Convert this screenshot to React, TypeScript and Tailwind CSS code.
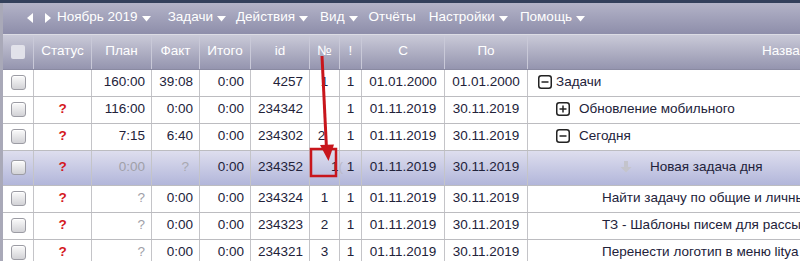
import React from "react";

const F = { fontFamily: '"Liberation Sans", Arial, sans-serif' };

const W = [31, 58, 60, 48, 51, 59, 30, 22, 83, 83];

function Caret() {
  return (
    <svg width="9" height="6" viewBox="0 0 9 6" className="ml-[4px] mt-[2px]">
      <path d="M0 0 H9 L4.5 5.5 Z" fill="#fff" />
    </svg>
  );
}

function Checkbox() {
  return (
    <div className="w-[15px] h-[15px] rounded-[3px] border border-[#9c9ca4] bg-gradient-to-b from-[#fbfbfb] to-[#d2d2d6] shadow-[inset_0_1px_0_#fff]" />
  );
}

function TreeBox({ plus }: { plus?: boolean }) {
  return (
    <svg width="14" height="14" viewBox="0 0 14 14">
      <rect x="0.75" y="0.75" width="12.5" height="12.5" rx="2.5" fill="#fff" stroke="#222" strokeWidth="1.5" />
      <path d="M3.5 7 H10.5" stroke="#222" strokeWidth="1.5" />
      {plus && <path d="M7 3.5 V10.5" stroke="#222" strokeWidth="1.5" />}
    </svg>
  );
}

type Row = {
  status?: boolean;
  plan: string;
  planGrey?: boolean;
  fakt: string;
  faktGrey?: boolean;
  itogo: string;
  id: string;
  num: React.ReactNode;
  c: string;
  po: string;
  name: React.ReactNode;
  hl?: boolean;
};

const rows: Row[] = [
  {
    plan: "160:00",
    fakt: "39:08",
    itogo: "0:00",
    id: "4257",
    num: "1",
    c: "01.01.2000",
    po: "01.01.2000",
    name: (
      <div className="flex items-center pl-[10px]">
        <TreeBox />
        <span className="ml-[4px]">Задачи</span>
      </div>
    ),
  },
  {
    status: true,
    plan: "116:00",
    fakt: "0:00",
    itogo: "0:00",
    id: "234342",
    num: "",
    c: "01.11.2019",
    po: "30.11.2019",
    name: (
      <div className="flex items-center pl-[28px]">
        <TreeBox plus />
        <span className="ml-[9px]">Обновление мобильного</span>
      </div>
    ),
  },
  {
    status: true,
    plan: "7:15",
    fakt: "6:40",
    itogo: "0:00",
    id: "234302",
    num: <span className="pr-[6px]">2</span>,
    c: "01.11.2019",
    po: "30.11.2019",
    name: (
      <div className="flex items-center pl-[28px]">
        <TreeBox />
        <span className="ml-[9px]">Сегодня</span>
      </div>
    ),
  },
  {
    status: true,
    plan: "0:00",
    planGrey: true,
    fakt: "?",
    faktGrey: true,
    itogo: "0:00",
    id: "234352",
    num: (
      <span className="flex w-full justify-end">
        <span>1</span>
        <span className="text-[#b8b8c8] -mr-[4px]">(</span>
      </span>
    ),
    c: "01.11.2019",
    po: "30.11.2019",
    hl: true,
    name: (
      <div className="flex items-center pl-[91px]">
        <svg width="14" height="14" viewBox="0 0 14 14">
          <path d="M5 1 H9 V7 H12.5 L7 12.5 L1.5 7 H5 Z" fill="#c4c4cc" />
        </svg>
        <span className="ml-[17px]">Новая задача дня</span>
      </div>
    ),
  },
  {
    status: true,
    plan: "?",
    planGrey: true,
    fakt: "0:00",
    itogo: "0:00",
    id: "234324",
    num: "1",
    c: "01.11.2019",
    po: "30.11.2019",
    name: <div className="pl-[74px]">Найти задачу по общие и личные</div>,
  },
  {
    status: true,
    plan: "?",
    planGrey: true,
    fakt: "0:00",
    itogo: "0:00",
    id: "234323",
    num: "2",
    c: "01.11.2019",
    po: "30.11.2019",
    name: <div className="pl-[74px]">ТЗ - Шаблоны писем для рассылки</div>,
  },
  {
    status: true,
    plan: "?",
    planGrey: true,
    fakt: "0:00",
    itogo: "0:00",
    id: "234321",
    num: "3",
    c: "01.11.2019",
    po: "30.11.2019",
    name: <div className="pl-[74px]">Перенести логотип в меню litya</div>,
  },
];

function Cell({
  w,
  children,
  align = "center",
  className = "",
}: {
  w: number;
  children?: React.ReactNode;
  align?: "center" | "right" | "left";
  className?: string;
}) {
  const a =
    align === "right" ? "justify-end pr-[6px]" : align === "left" ? "justify-start" : "justify-center";
  return (
    <div
      className={`shrink-0 flex items-center border-r border-[#c4c4c8] h-full pb-[2px] ${a} ${className}`}
      style={{ width: w }}
    >
      {children}
    </div>
  );
}

export default function App() {
  const headers = ["Статус", "План", "Факт", "Итого", "id", "№", "!", "С", "По"];
  return (
    <div className="relative w-[800px] h-[261px] overflow-hidden bg-white text-[13.5px]" style={F}>
      <div className="h-[3px] bg-[#33405c]" />
      <div className="border-l-[3px] border-[#a9a9b8]">
        {/* toolbar */}
        <div className="h-[31px] flex items-center bg-gradient-to-b from-[#b3b3c8] to-[#8e8eaa] text-white pb-[2px] whitespace-nowrap">
          <svg width="7" height="10" viewBox="0 0 7 10" className="ml-[24px]">
            <path d="M6 0 V10 L0 5 Z" fill="#fff" />
          </svg>
          <svg width="7" height="10" viewBox="0 0 7 10" className="ml-[10px]">
            <path d="M1 0 V10 L7 5 Z" fill="#fff" />
          </svg>
          <span className="ml-[6px]">Ноябрь 2019</span>
          <Caret />
          <span className="ml-[17px]">Задачи</span>
          <Caret />
          <span className="ml-[10px]">Действия</span>
          <Caret />
          <span className="ml-[12px]">Вид</span>
          <Caret />
          <span className="ml-[11px]">Отчёты</span>
          <span className="ml-[13px]">Настройки</span>
          <Caret />
          <span className="ml-[12px]">Помощь</span>
          <Caret />
        </div>
        <div className="h-[1px] bg-[#dcdce4]" />
        {/* header */}
        <div className="h-[35px] flex bg-gradient-to-b from-[#cacad8] to-[#9595af] text-white border-b border-[#8a8aa2] whitespace-nowrap">
          <div
            className="shrink-0 flex items-center justify-center border-r border-[#c9c9d8] h-full"
            style={{ width: W[0] }}
          >
            <div className="w-[14px] h-[14px] rounded-[2px] bg-[#e2e2ea]" />
          </div>
          {headers.map((h, i) => (
            <div
              key={h}
              className="shrink-0 flex items-center justify-center border-r border-[#c9c9d8] h-full pb-[2px]"
              style={{ width: W[i + 1] }}
            >
              {h}
            </div>
          ))}
          <div className="flex-1 flex items-center pl-[234px] pb-[2px] overflow-hidden">Название</div>
        </div>
        {/* rows */}
        {rows.map((r, i) => (
          <div
            key={i}
            className={`flex border-b border-[#bcbcc0] text-[#22223a] whitespace-nowrap ${
              r.hl ? "h-[35px] bg-gradient-to-b from-[#dedeee] to-[#b2b6da]" : "h-[27px]"
            }`}
          >
            <Cell w={W[0]}>
              <Checkbox />
            </Cell>
            <Cell w={W[1]}>
              {r.status && <span className="text-[#d4161c] font-bold">?</span>}
            </Cell>
            <Cell w={W[2]} align="right" className={r.planGrey ? "text-[#a0a0a8]" : ""}>
              {r.plan}
            </Cell>
            <Cell w={W[3]} align="right" className={r.faktGrey ? "text-[#a8a8b0] pr-[10px]" : ""}>
              {r.fakt}
            </Cell>
            <Cell w={W[4]} align="right">
              {r.itogo}
            </Cell>
            <Cell w={W[5]} align="right">
              {r.id}
            </Cell>
            <Cell w={W[6]}>{r.num}</Cell>
            <Cell w={W[7]}>1</Cell>
            <Cell w={W[8]}>{r.c}</Cell>
            <Cell w={W[9]}>{r.po}</Cell>
            <div className="flex-1 flex items-center h-full pb-[2px] overflow-hidden">{r.name}</div>
          </div>
        ))}
      </div>
      {/* red annotation */}
      <svg className="absolute left-0 top-0 pointer-events-none" width="800" height="261">
        <rect x="311" y="149" width="25" height="27" fill="none" stroke="#c8161c" strokeWidth="2.5" />
        <path d="M322 56 L326.5 149" stroke="#c8161c" strokeWidth="3" />
        <path d="M320 145 L334 144.5 L328.5 161 Z" fill="#c8161c" />
      </svg>
    </div>
  );
}
